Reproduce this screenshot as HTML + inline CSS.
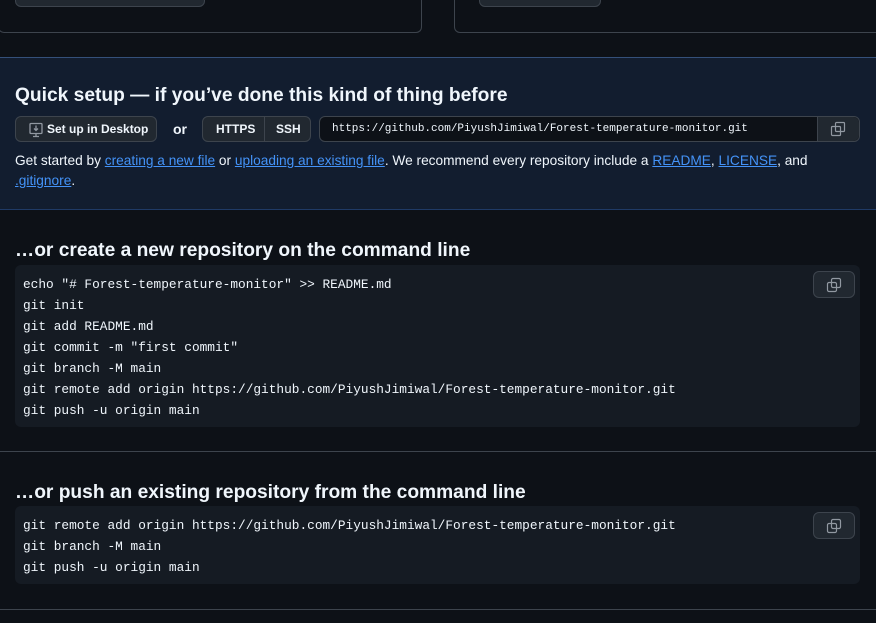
<!DOCTYPE html>
<html><head><style>
body{margin:0;width:876px;height:623px;overflow:hidden;background:#0d1117;color:#f0f6fc;font-family:"Liberation Sans",sans-serif;position:relative}
.abs{position:absolute}
.card{border:1px solid #3d444d;border-top:none;border-radius:0 0 6px 6px;background:#0d1117}
.btn{background:#212830;border:1px solid #3d444d;border-radius:6px;box-sizing:border-box}
a{color:#4493f8;text-decoration:underline}
.mono{font-family:"Liberation Mono",monospace;font-size:12.8px}
h2{margin:0;font-size:19.2px;font-weight:bold;position:absolute;left:15px}
.code{position:absolute;left:15px;width:845px;background:#151b23;border-radius:6px;box-sizing:border-box;padding:9px 8px;line-height:21px;white-space:pre;color:#f0f6fc}
.cp{position:absolute;right:5px;top:6px;width:42px;height:27px;background:#212830;border:1px solid #3d444d;border-radius:6px;box-sizing:border-box}
.cp svg{position:absolute;left:12px;top:5px}
</style></head><body>
<div class="abs card" style="left:-2px;top:-5px;width:422px;height:37px"></div>
<div class="abs card" style="left:454px;top:-5px;width:430px;height:37px;border-radius:0 0 0 6px"></div>
<div class="abs btn" style="left:15px;top:-20px;width:190px;height:27px"></div>
<div class="abs btn" style="left:479px;top:-20px;width:122px;height:27px"></div>

<div class="abs" style="left:0;top:57px;width:876px;height:153px;background:#121d2f;border-top:1px solid #34507a;border-bottom:1px solid #1f3a66;box-sizing:border-box"></div>
<h2 style="top:85px">Quick setup — if you’ve done this kind of thing before</h2>
<div class="abs btn" style="left:15px;top:116px;width:142px;height:26px;font-size:12px;font-weight:bold;line-height:24px;padding-left:31px">Set up in Desktop
<svg class="abs" style="left:12px;top:5px" width="16" height="16" viewBox="0 0 16 16" fill="none" stroke="#9198a1" stroke-width="1.3"><rect x="2" y="1.5" width="12" height="10" rx="1"/><path d="M8 3.5v5M6 6.5l2 2 2-2M5 14.5h6M8 11.5v3"/></svg></div>
<div class="abs" style="left:173px;top:121px;font-size:14px;font-weight:bold">or</div>
<div class="abs btn" style="left:202px;top:116px;width:109px;height:26px;font-size:12px;font-weight:bold;line-height:24px">
<span class="abs" style="left:13px">HTTPS</span><div class="abs" style="left:61px;top:0;width:1px;height:24px;background:#3d444d"></div><span class="abs" style="left:73px">SSH</span></div>
<div class="abs" style="left:319px;top:116px;width:541px;height:26px;border:1px solid #3d444d;border-radius:6px;box-sizing:border-box;background:#0d1117">
<span class="abs mono" style="left:12px;top:5px;font-size:11px;line-height:14px">https://github.com/PiyushJimiwal/Forest-temperature-monitor.git</span>
<div class="abs" style="right:0;top:0;width:41px;height:24px;background:#212830;border-left:1px solid #3d444d;border-radius:0 6px 6px 0"><svg class="abs" style="left:12px;top:4px" width="16" height="16" viewBox="0 0 16 16" fill="none" stroke="#9198a1" stroke-width="1.2"><rect x="1.5" y="5.5" width="9" height="9" rx="1"/><rect x="5.5" y="1.5" width="9" height="9" rx="1"/></svg></div></div>
<div class="abs" style="left:15px;top:151px;width:840px;font-size:13.7px;line-height:20px">Get started by <a>creating a new file</a> or <a>uploading an existing file</a>. We recommend every repository include a <a>README</a>, <a>LICENSE</a>, and <br><a>.gitignore</a>.</div>

<h2 style="top:240px">…or create a new repository on the command line</h2>
<div class="code mono" style="top:265px;height:162px">echo "# Forest-temperature-monitor" >> README.md
git init
git add README.md
git commit -m "first commit"
git branch -M main
git remote add origin https://github.com/PiyushJimiwal/Forest-temperature-monitor.git
git push -u origin main<div class="cp"><svg width="16" height="16" viewBox="0 0 16 16" fill="none" stroke="#9198a1" stroke-width="1.2"><rect x="1.5" y="5.5" width="9" height="9" rx="1.5"/><rect x="5.5" y="1.5" width="9" height="9" rx="1.5"/></svg></div></div>
<div class="abs" style="left:0;top:451px;width:876px;height:1px;background:#3d444d"></div>

<h2 style="top:482px">…or push an existing repository from the command line</h2>
<div class="code mono" style="top:506px;height:78px">git remote add origin https://github.com/PiyushJimiwal/Forest-temperature-monitor.git
git branch -M main
git push -u origin main<div class="cp"><svg width="16" height="16" viewBox="0 0 16 16" fill="none" stroke="#9198a1" stroke-width="1.2"><rect x="1.5" y="5.5" width="9" height="9" rx="1.5"/><rect x="5.5" y="1.5" width="9" height="9" rx="1.5"/></svg></div></div>
<div class="abs" style="left:0;top:609px;width:876px;height:1px;background:#3d444d"></div>
</body></html>
